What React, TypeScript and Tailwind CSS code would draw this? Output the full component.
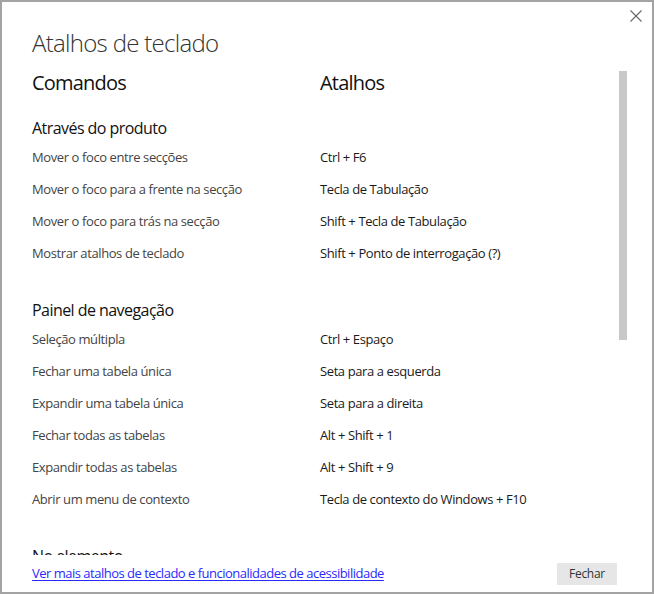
import React from 'react'

type Shortcut = { command: string; keys: string }

const sections: { title: string; items: Shortcut[] }[] = [
  {
    title: 'Através do produto',
    items: [
      { command: 'Mover o foco entre secções', keys: 'Ctrl + F6' },
      { command: 'Mover o foco para a frente na secção', keys: 'Tecla de Tabulação' },
      { command: 'Mover o foco para trás na secção', keys: 'Shift + Tecla de Tabulação' },
      { command: 'Mostrar atalhos de teclado', keys: 'Shift + Ponto de interrogação (?)' },
    ],
  },
  {
    title: 'Painel de navegação',
    items: [
      { command: 'Seleção múltipla', keys: 'Ctrl + Espaço' },
      { command: 'Fechar uma tabela única', keys: 'Seta para a esquerda' },
      { command: 'Expandir uma tabela única', keys: 'Seta para a direita' },
      { command: 'Fechar todas as tabelas', keys: 'Alt + Shift + 1' },
      { command: 'Expandir todas as tabelas', keys: 'Alt + Shift + 9' },
      { command: 'Abrir um menu de contexto', keys: 'Tecla de contexto do Windows + F10' },
    ],
  },
  {
    title: 'No elemento',
    items: [],
  },
]

const font = "font-['Open_Sans','Noto_Sans',sans-serif]"

const ShortcutRow = ({ command, keys }: Shortcut) => (
  <div className="flex h-8 items-center text-[13px] tracking-[-0.4px]">
    <div className="w-[288px] flex-none text-[#444]">{command}</div>
    <div className="text-[#1a1a1a]">{keys}</div>
  </div>
)

export default function App() {
  return (
    <div className={`relative flex h-[594px] w-[654px] flex-col border-2 border-[#a3a3a3] bg-white ${font}`}>
      <button className="absolute right-[9px] top-[7px] p-[1px] text-[#666]" aria-label="Fechar">
        <svg width="12" height="12" viewBox="0 0 12 12" stroke="currentColor" strokeWidth="1.1">
          <path d="M0.5 0.5 L11.5 11.5 M11.5 0.5 L0.5 11.5" />
        </svg>
      </button>

      <h1 className="mt-[25px] pl-[30px] text-[24px] font-light leading-8 tracking-[-0.7px] text-[#333]">
        Atalhos de teclado
      </h1>

      <div className="flex min-h-0 flex-1">
        <div className="flex-1 overflow-hidden pl-[30px]">
          <div className="mt-[10px] flex h-[28px] items-center text-[20px] tracking-[-0.8px] text-[#111]">
            <div className="w-[288px] flex-none">Comandos</div>
            <div>Atalhos</div>
          </div>

          {sections.map((section, i) => (
            <div key={section.title} className={i === 0 ? 'mt-[19px]' : i === 1 ? 'mt-[28px]' : 'mt-[28px]'}>
              <div className="mb-[2px] flex h-6 items-center text-[16px] tracking-[-0.55px] text-[#111]">
                {section.title}
              </div>
              {section.items.map((item) => (
                <ShortcutRow key={item.command} {...item} />
              ))}
            </div>
          ))}
        </div>
        <div className="mr-[25px] w-2 flex-none pt-[12px]">
          <div className="h-[269px] bg-[#c8c8c8]" />
        </div>
      </div>

      <div className="flex h-[37px] flex-none items-center justify-between pl-[30px] pr-[35px]">
        <a href="#" className="text-[13px] tracking-[-0.5px] text-[#2a2aff] underline underline-offset-2">
          Ver mais atalhos de teclado e funcionalidades de acessibilidade
        </a>
        <button className="h-[22px] w-[60px] bg-[#e6e6e6] text-[12px] tracking-[-0.3px] text-[#333]">Fechar</button>
      </div>
    </div>
  )
}
